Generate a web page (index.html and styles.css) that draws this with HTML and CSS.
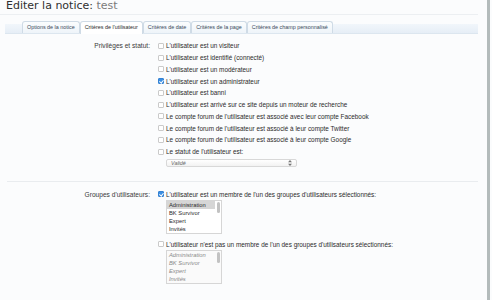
FILE: index.html
```html
<!DOCTYPE html>
<html lang="fr">
<head>
    <meta charset="UTF-8">
    <title>Editer la notice: test</title>
    <link rel="stylesheet" href="styles.css">
</head>
<body>
<div class="window">
    <div class="page">
        <div class="title-bar">
            <h1>Editer la notice: <span class="muted">test</span></h1>
        </div>

        <div class="tabs">
            <span class="tab">Options de la notice</span>
            <span class="tab active">Critères de l'utilisateur</span>
            <span class="tab">Critères de date</span>
            <span class="tab">Critères de la page</span>
            <span class="tab">Critères de champ personnalisé</span>
        </div>

        <div class="form-row section">
            <div class="row-label">Privilèges et statut:</div>
            <div class="row-body">
                <div class="check"><span class="box"></span>L'utilisateur est un visiteur</div>
                <div class="check"><span class="box"></span>L'utilisateur est identifié (connecté)</div>
                <div class="check"><span class="box"></span>L'utilisateur est un modérateur</div>
                <div class="check"><span class="box checked"></span>L'utilisateur est un administrateur</div>
                <div class="check"><span class="box"></span>L'utilisateur est banni</div>
                <div class="check"><span class="box"></span>L'utilisateur est arrivé sur ce site depuis un moteur de recherche</div>
                <div class="check"><span class="box"></span>Le compte forum de l'utilisateur est associé avec leur compte Facebook</div>
                <div class="check"><span class="box"></span>Le compte forum de l'utilisateur est associé à leur compte Twitter</div>
                <div class="check"><span class="box"></span>Le compte forum de l'utilisateur est associé à leur compte Google</div>
                <div class="check"><span class="box"></span>Le statut de l'utilisateur est:</div>
                <div class="select">
                    <span>Validé</span>
                    <svg width="4" height="6" viewBox="0 0 4 6"><path d="M2 0L4 2.2H0z M2 6L4 3.8H0z" fill="#777"/></svg>
                </div>
            </div>
        </div>

        <div class="form-row groups">
            <div class="row-label">Groupes d'utilisateurs:</div>
            <div class="row-body">
                <div class="check"><span class="box checked"></span>L'utilisateur est un membre de l'un des groupes d'utilisateurs sélectionnés:</div>
                <div class="listbox">
                    <div class="options">
                        <div class="option selected">Administration</div>
                        <div class="option">BK Survivor</div>
                        <div class="option">Expert</div>
                        <div class="option">Invités</div>
                    </div>
                    <div class="track"><span class="thumb"></span></div>
                </div>

                <div class="check spaced"><span class="box"></span>L'utilisateur n'est pas un membre de l'un des groupes d'utilisateurs sélectionnés:</div>
                <div class="listbox disabled">
                    <div class="options">
                        <div class="option">Administration</div>
                        <div class="option">BK Survivor</div>
                        <div class="option">Expert</div>
                        <div class="option">Invités</div>
                    </div>
                    <div class="track"><span class="thumb"></span></div>
                </div>
            </div>
        </div>
    </div>
</div>
</body>
</html>
```

FILE: styles.css
```css
* {
    margin: 0;
    padding: 0;
    box-sizing: border-box;
}

body {
    background-color: #fbfcfd;
    color: #2b2b2b;
    font-family: "Liberation Sans", Arial, sans-serif;
    font-size: 6.4px;
    width: 492px;
    height: 300px;
    overflow: hidden;
}

.window {
    width: 490px;
    height: 300px;
    border-right: 3px solid #b3bbbb;
}

.page {
    width: 478px;
}

.title-bar {
    height: 15px;
    border-bottom: 1px solid #eceff2;
    padding-left: 6px;
}

h1 {
    font-family: "DejaVu Sans", Verdana, sans-serif;
    font-weight: normal;
    font-size: 11px;
    line-height: 11px;
    color: #2f2f2f;
}

h1 .muted {
    color: #7b7b7b;
}

.tabs {
    display: flex;
    align-items: flex-end;
    height: 13px;
    margin-top: 6px;
    margin-left: 5px;
    padding-left: 17px;
    background: linear-gradient(to bottom, transparent 3px, #f1f6fb 3px, #e6eef6 12px);
    border-bottom: 1px solid #dce6ef;
}

.tab {
    height: 12px;
    line-height: 11px;
    padding: 0 4px;
    font-size: 5.4px;
    color: #3a4a5a;
    background: linear-gradient(to bottom, #fbfdfe, #eef4f9);
    border: 1px solid #cfdbe6;
    border-bottom: none;
    border-radius: 3px 3px 0 0;
    white-space: nowrap;
}

.tab.active {
    background: #ffffff;
    height: 13px;
    margin-bottom: -1px;
    color: #2b2b2b;
}

.form-row {
    display: grid;
    grid-template-columns: 143px 1fr;
    column-gap: 8px;
    margin-left: 7px;
}

.section {
    padding-top: 6px;
    padding-bottom: 14px;
    border-bottom: 1px solid #e9ecef;
}

.groups {
    padding-top: 7px;
}

.row-label {
    text-align: right;
    font-size: 6.6px;
    line-height: 11.75px;
    color: #3a3a3a;
}

.check {
    display: flex;
    align-items: center;
    height: 11.75px;
    white-space: nowrap;
}

.check.spaced {
    margin-top: 4px;
}

.box {
    width: 6px;
    height: 6px;
    margin-right: 2px;
    border: 1px solid #cacaca;
    border-radius: 1px;
    background: #ffffff;
    flex-shrink: 0;
    position: relative;
}

.box.checked {
    background: #3b8fe3;
    border-color: #3582d3;
}

.box.checked::after {
    content: "";
    position: absolute;
    left: 1px;
    top: 0;
    width: 1.5px;
    height: 3px;
    border: solid #ffffff;
    border-width: 0 1px 1px 0;
    transform: rotate(40deg);
}

.select {
    display: flex;
    align-items: center;
    justify-content: space-between;
    width: 131px;
    height: 8px;
    margin-top: 1px;
    margin-left: 8px;
    padding: 0 4px;
    border: 1px solid #d8d8d8;
    border-radius: 2px;
    background: linear-gradient(to bottom, #ffffff, #f2f2f2);
    font-style: italic;
    font-size: 5.4px;
    color: #666;
}

.listbox {
    display: flex;
    width: 56px;
    height: 34px;
    margin-left: 8px;
    border: 1px solid #d6d6d6;
    background: #ffffff;
}

.options {
    flex: 1;
}

.option {
    height: 8px;
    line-height: 8px;
    padding-left: 2px;
    font-size: 5.8px;
    color: #2b2b2b;
}

.option.selected {
    background: #d6d6d6;
}

.track {
    width: 6px;
    padding: 1px 1.5px;
}

.thumb {
    display: block;
    width: 3px;
    height: 11px;
    border-radius: 2px;
    background: #c2c2c2;
}

.listbox.disabled {
    background: #fafafa;
}

.listbox.disabled .option {
    font-style: italic;
    color: #8a8a8a;
}
```
